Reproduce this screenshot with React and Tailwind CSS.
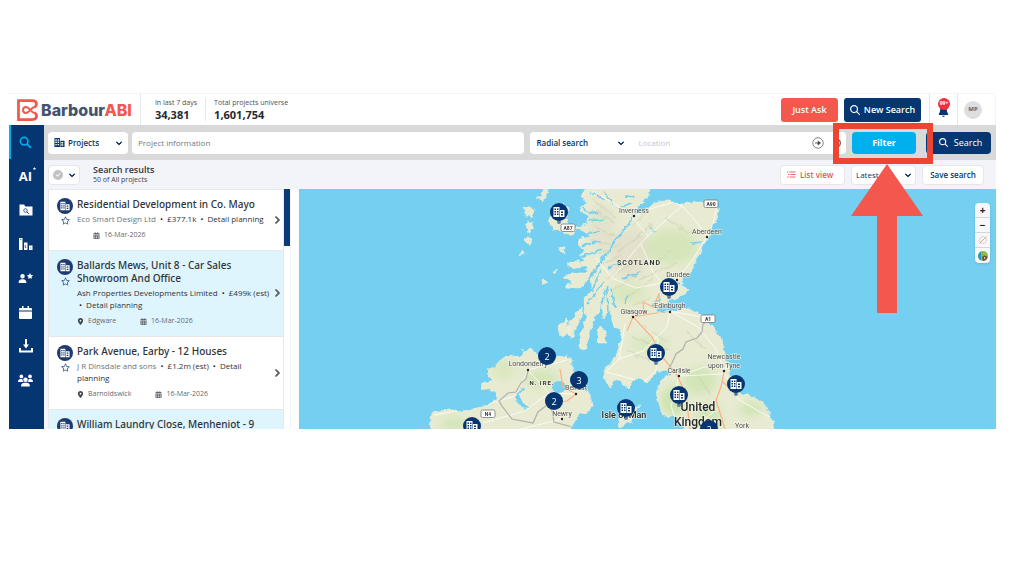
import clsx from 'clsx';
import {
  FaBell,
  FaCalendarDays,
  FaChevronDown,
  FaChevronRight,
  FaCircleCheck,
  FaLocationDot,
  FaMagnifyingGlass,
  FaRegStar,
  FaStar,
  FaUser,
  FaUsers
} from 'react-icons/fa6';

const MAP_W = 697;
const MAP_H = 240;

const projects = [
  {
    title: 'Residential Development in Co. Mayo',
    meta: [['Eco Smart Design Ltd', '£377.1k', 'Detail planning']],
    date: '16-Mar-2026'
  },
  {
    title: 'Ballards Mews, Unit 8 - Car Sales Showroom And Office',
    meta: [['Ash Properties Developments Limited', '£499k (est)'], ['', 'Detail planning']],
    place: 'Edgware',
    date: '16-Mar-2026',
    unread: true
  },
  {
    title: 'Park Avenue, Earby - 12 Houses',
    meta: [['J R Dinsdale and sons', '£1.2m (est)', 'Detail planning']],
    place: 'Barnoldswick',
    date: '16-Mar-2026'
  },
  {
    title: 'William Laundry Close, Menheniot - 9',
    unread: true
  }
];

// x / y on the 697 x 240 map canvas
const pins = [
  { x: 260, y: 23 },
  { x: 370, y: 98 },
  { x: 357, y: 164 },
  { x: 437, y: 195 },
  { x: 380, y: 206 },
  { x: 327, y: 219 },
  { x: 173, y: 237 },
  { x: 248, y: 167, count: 2 },
  { x: 280, y: 191, count: 3 },
  { x: 255, y: 212, count: 2 },
  { x: 410, y: 240, count: 2 }
];

const towns = [
  { name: 'Inverness', x: 335, y: 24, dot: [335, 27] },
  { name: 'Aberdeen', x: 408, y: 45, dot: [408, 48] },
  { name: 'Dundee', x: 379, y: 88, dot: [378, 91] },
  { name: 'Edinburgh', x: 371, y: 119, dot: [371, 123] },
  { name: 'Glasgow', x: 335, y: 125, dot: [334, 128] },
  { name: 'Carlisle', x: 380, y: 184, dot: [380, 187] },
  { name: 'Newcastle', x: 425, y: 170 },
  { name: 'upon Tyne', x: 425, y: 179, dot: [425, 182] },
  { name: 'Londonderry', x: 229, y: 177, dot: [229, 181] },
  { name: 'Belfast', x: 277, y: 201, dot: [277, 205] },
  { name: 'Newry', x: 263, y: 227, dot: [263, 230] },
  { name: 'York', x: 443, y: 239 }
];

const shields = [
  { name: 'A90', x: 412, y: 15 },
  { name: 'A87', x: 269, y: 39 },
  { name: 'A1', x: 409, y: 130 },
  { name: 'N4', x: 189, y: 225 }
];

const Chevron = ({ className }) => (
  <FaChevronDown size={6} stroke="currentColor" strokeWidth={80} className={className} />
);

const BuildingIcon = ({ className }) => (
  <svg viewBox="0 0 24 24" fill="currentColor" fillRule="evenodd" className={className}>
    <path d="M1 2h12v20H1zM3 5v3h3V5zM8 5v3h3V5zM3 10v3h3v-3zM8 10v3h3v-3zM3 15v3h3v-3zM8 15v3h3v-3z" />
    <path d="M14 8h9v14h-9zM16 11v3h4v-3zM16 16v3h4v-3z" />
  </svg>
);

const Logo = () => (
  <a href="#home" className="flex items-center gap-[3px] pr-2 pl-2">
    <svg viewBox="0 0 42 44" className="h-[22px] w-[21px]" fill="none" stroke="#f4574d">
      <path d="M35 17q4-3 4-7 0-7-9-7H3v38h27q9 0 9-7 0-4-4-7" strokeWidth="5.500" />
      <path d="M36 16c-7-1-11 12-18 12a6 6 0 1 1 0-12c7 0 11 13 18 12" strokeWidth="4" />
    </svg>
    <span className="font-[Inter,sans-serif] text-[16px] leading-5 font-extrabold text-[#44536e]">
      Barbour<span className="text-[#f4574d]">ABI</span>
    </span>
  </a>
);

const Header = () => (
  <header className="flex h-8 items-stretch rounded-tr border-t border-r border-gray-100 bg-white">
    <Logo />
    <dl className="my-0 flex items-center border-l border-gray-200 pl-3.5 text-[7px] text-[#4a4f57]">
      <div className="pr-2">
        <dt className="leading-[10px]">In last 7 days</dt>
        <dd className="text-[11px] leading-[13px] font-bold text-[#26292e]">34,381</dd>
      </div>
      <div className="border-l border-gray-200 pl-2">
        <dt className="leading-[10px]">Total projects universe</dt>
        <dd className="text-[11px] leading-[13px] font-bold text-[#26292e]">1,601,754</dd>
      </div>
    </dl>
    <div className="ml-auto flex items-center gap-1.5 pr-2">
      <button className="h-6 w-[57px] rounded-[3px] bg-[#f4574d] text-[9px] font-semibold text-white">Just Ask</button>
      <button className="flex h-6 w-[77px] items-center justify-center gap-1 rounded-[3px] bg-[#063672] text-[9px] font-semibold text-white">
        <FaMagnifyingGlass size={10} /> New Search
      </button>
    </div>
    <button aria-label="Notifications" className="relative flex w-7 items-center justify-center border-l border-gray-200">
      <FaBell size={11} className="mt-1 text-[#063672]" />
      <span className="absolute top-1 left-2 flex h-3 w-3 items-center justify-center rounded-full bg-[#f03040] text-[5px] font-bold text-white">
        99+
      </span>
    </button>
    <div className="flex items-center border-l border-gray-200 pr-[13px] pl-1.5">
      <button className="h-[18px] w-[18px] rounded-full bg-[#dedede] text-[6px] font-bold text-[#53657f]">MP</button>
    </div>
  </header>
);

const SearchIcon = () => (
  <svg viewBox="0 0 24 24" className="h-[13px] w-[13px]" fill="none" stroke="#00b0ee" strokeWidth="3">
    <circle cx="9.500" cy="9.500" r="7" />
    <path d="m14.500 14.500 7.500 7.500" strokeWidth="3.500" />
  </svg>
);

const ProjectFolderIcon = () => (
  <svg viewBox="0 0 28 24" className="h-3 w-3.5">
    <path d="M1 1h9l3 4h14v18H1z" fill="#fff" />
    <circle cx="13" cy="13" r="3.500" fill="none" stroke="#063672" strokeWidth="1.500" />
    <path d="m15.500 15.500 4 4" stroke="#063672" strokeWidth="2" />
  </svg>
);

const LeagueIcon = () => (
  <svg viewBox="0 0 28 24" className="h-3 w-3.5">
    <path d="M0 0h7v24H0zM10 9h7v15h-7zM20 15h7v9h-7z" fill="#fff" />
    <path d="M2.500 3h2M12.500 14v5h2M22.500 20h2" stroke="#063672" strokeWidth="1.500" fill="none" />
  </svg>
);

const DownloadIcon = () => (
  <svg viewBox="0 0 28 28" className="h-3.5 w-3.5" fill="none" stroke="#fff">
    <path d="M2 18v7h24v-7" strokeWidth="4" />
    <path d="M14 0v13" strokeWidth="4" />
    <path d="M8 11h12l-6 8z" fill="#fff" strokeWidth="0" />
  </svg>
);

const CalendarIcon = () => (
  <svg viewBox="0 0 26 26" className="h-[13px] w-[13px]" fill="#fff">
    <path d="M6 0h3v4h8V0h3v4h4q2 0 2 2v3H0V6q0-2 2-2h4zM0 12h26v12q0 2-2 2H2q-2 0-2-2z" />
    <path d="M0 9h26v3H0z" fill="#7f98b8" />
  </svg>
);

const Sidebar = () => {
  const items = [
    { label: 'Search', icon: <SearchIcon />, active: true },
    {
      label: 'AI',
      icon: (
        <span className="relative text-[13px] leading-4 font-bold">
          AI<FaStar size={3} className="absolute -top-px -right-1" />
        </span>
      )
    },
    { label: 'Saved projects', icon: <ProjectFolderIcon /> },
    { label: 'League tables', icon: <LeagueIcon /> },
    { label: 'Contacts', icon: <span className="flex items-start"><FaUser size={9} className="mt-px" /><FaStar size={6} /></span> },
    { label: 'Calendar', icon: <CalendarIcon /> },
    { label: 'Downloads', icon: <DownloadIcon /> },
    { label: 'Team', icon: <FaUsers size={15} /> }
  ];

  return (
    <nav className="w-[35px] shrink-0 bg-[#063672] text-white">
      {items.map((item) => (
        <a
          key={item.label}
          href="#nav"
          aria-label={item.label}
          className={clsx(
            'flex h-[34px] items-center justify-center border-l-2 pr-1',
            item.active ? 'border-[#00b0ee]' : 'border-transparent'
          )}
        >
          {item.icon}
        </a>
      ))}
    </nav>
  );
};

const Callout = () => (
  <>
    <div className="pointer-events-none absolute -top-[9px] -right-[17px] -bottom-[10px] -left-[19px] border-6 border-[#ee4432]" />
    <svg viewBox="0 0 72 149" className="pointer-events-none absolute top-8 -left-px h-[149px] w-[72px] max-w-none">
      <path d="M36 0 72 52H46v97H26V52H0z" fill="#f4574d" />
    </svg>
  </>
);

const SearchBar = () => (
  <form className="flex h-[35px] items-center bg-[#d9d9d9] pr-[5px] pl-1" onSubmit={(e) => e.preventDefault()}>
    <label className="relative flex h-[22px] w-20 items-center rounded-sm bg-white text-[#063672]">
      <BuildingIcon className="absolute left-1.5 h-[11px] w-[11px]" />
      <select aria-label="Record type" className="h-full w-full appearance-none pl-5 text-[8px] font-semibold">
        <option>Projects</option>
      </select>
      <Chevron className="absolute right-1.5" />
    </label>
    <input
      aria-label="Project information"
      placeholder="Project information"
      className="ml-1 h-[22px] min-w-0 flex-[381] rounded-sm bg-white px-1.5 text-[8px] placeholder:text-[#75787c]"
    />
    <div className="ml-1.5 flex h-[22px] min-w-0 flex-[316] items-center rounded-sm bg-white text-[#063672]">
      <label className="relative flex h-full w-[100px] items-center">
        <select aria-label="Location type" className="h-full w-full appearance-none pl-1.5 text-[8px] font-semibold">
          <option>Radial search</option>
        </select>
        <Chevron className="absolute right-1.5" />
      </label>
      <input aria-label="Location" placeholder="Location" className="h-full min-w-0 flex-1 px-2 text-[8px] placeholder:text-[#c4c6c9]" />
      <button type="button" aria-label="Use location" className="mr-2">
        <svg viewBox="0 0 24 24" className="h-3 w-3" fill="none" stroke="#5c5f63" strokeWidth="1.500">
          <circle cx="12" cy="12" r="10.500" />
          <path d="M6 12h10" strokeWidth="2" />
          <path d="m12 8 5 4-5 4z" fill="#333" />
        </svg>
      </button>
      <button type="button" aria-label="Pick on map" className="mr-1">
        <svg viewBox="0 0 24 24" className="h-2.5 w-2.5" fill="none" stroke="#5c5f63" strokeWidth="3">
          <circle cx="12" cy="12" r="8" />
        </svg>
      </button>
    </div>
    <div className="relative z-20 ml-1.5 flex">
      <button type="button" className="h-[22px] w-16 rounded-sm bg-[#00b0ee] text-[9px] font-bold text-white">Filter</button>
      <Callout />
    </div>
    <button className="ml-2.5 flex h-[22px] w-[65px] items-center justify-center gap-1.5 rounded-sm bg-[#063672] pl-1 text-[9px] text-white">
      <FaMagnifyingGlass size={9} /> Search
    </button>
  </form>
);

const ResultsBar = () => (
  <div className="flex h-[29px] items-center bg-[#f3f4f9] pr-3 pl-1 text-[8px] font-semibold text-[#063672]">
    <button aria-label="Select results" className="flex h-5 w-8 items-center justify-between rounded-sm border border-gray-200 bg-white px-1">
      <FaCircleCheck size={10} className="text-[#c3c3c3]" />
      <Chevron />
    </button>
    <div className="ml-[13px]">
      <h1 className="text-[9px] leading-[11px] font-semibold text-[#34373c]">Search results</h1>
      <p className="text-[7px] leading-[10px] font-normal text-[#3f4247]">50 of All projects</p>
    </div>
    <div className="ml-auto flex gap-1.5">
      <button className="flex h-5 w-[65px] items-center gap-1 rounded-sm border border-gray-200 bg-white pl-1.5 text-[#f05058]">
        <svg viewBox="0 0 18 14" className="h-[7px] w-[9px]" fill="none" stroke="currentColor" strokeWidth="1.800">
          <path d="M5 2h12M7 7h10M5 12h12M0 2h3M2 7h3M0 12h3" />
        </svg>
        List view
      </button>
      <label className="relative flex h-5 w-[65px] items-center rounded-sm border border-gray-200 bg-white">
        <select aria-label="Sort order" className="h-full w-full appearance-none pl-1 text-[8px] font-normal">
          <option>Latest</option>
        </select>
        <Chevron className="absolute right-1" />
      </label>
      <button className="h-5 w-[62px] rounded-sm border border-gray-200 bg-white">Save search</button>
    </div>
  </div>
);

const ProjectCard = ({ project }) => (
  <li
    className={clsx(
      'flex border-b border-gray-200 pt-2 pr-0.5 pb-[9px] pl-2 last:flex-1 last:border-b-0',
      project.unread ? 'bg-[#dff5fe]' : 'bg-white'
    )}
  >
    <div className="flex w-4 shrink-0 flex-col items-center gap-0.5">
      <span className="flex h-4 w-4 items-center justify-center rounded-full bg-[#1e3a72] text-white">
        <BuildingIcon className="h-2.5 w-2.5" />
      </span>
      {project.meta && (
        <button aria-label="Follow project">
          <FaRegStar size={9} className="text-[#3a5f94]" />
        </button>
      )}
    </div>
    <div className="min-w-0 flex-1 pl-1">
      <h2 className="font-['Noto_Sans',sans-serif] text-[10px] leading-[13px] font-medium text-[#2f3338]">{project.title}</h2>
      {project.meta && (
        <div className="mt-0.5 text-[8px] leading-3 text-[#2f3338]">
          {project.meta.map((line, row) => (
            <p key={row}>
              {line.map((part, i) => (
                <span key={i} className={clsx(i === 0 && !project.unread && 'text-[#71757b]', project.unread && 'font-medium')}>
                  {i > 0 && <span className="mx-0.5 text-[#222]"> • </span>}
                  {part}
                </span>
              ))}
            </p>
          ))}
        </div>
      )}
      {project.date && (
        <div className="mt-1 flex h-3 items-center text-[7px] text-[#666a70]">
          {project.place && (
            <span className="mr-6 flex items-center gap-1">
              <FaLocationDot size={7} className="text-[#44474c]" /> {project.place}
            </span>
          )}
          <span className={clsx('flex items-center gap-1', !project.place && 'ml-4')}>
            <FaCalendarDays size={7} /> {project.date}
          </span>
        </div>
      )}
    </div>
    {project.meta && (
      <FaChevronRight size={8} stroke="currentColor" strokeWidth={60} className="ml-px shrink-0 self-center text-[#55585d]" />
    )}
  </li>
);

const MapCanvas = () => (
  <svg
    viewBox={`0 0 ${MAP_W} ${MAP_H}`}
    preserveAspectRatio="xMidYMid slice"
    className="absolute inset-0 h-full w-full font-['Roboto']"
  >
    <defs>
      <filter id="coast" x="-5%" y="-5%" width="110%" height="110%">
        <feTurbulence type="fractalNoise" baseFrequency="0.15" numOctaves="3" seed="4" />
        <feDisplacementMap in="SourceGraphic" scale="6" xChannelSelector="R" yChannelSelector="G" />
      </filter>
      <filter id="soft" x="-20%" y="-20%" width="140%" height="140%">
        <feGaussianBlur stdDeviation="4" />
      </filter>
      <clipPath id="land">
        <path id="britain" d="M288-4 283 5 287 14 280 22 291 27 288 35 281 40 290 46 277 54 286 60 280 66 285 71 268 75 275 80 286 77 290 84 275 84 262 89 273 93 266 98 281 99 292 90 293 99 284 112 287 128 281 149 281 161 288 160 291 144 296 128 303 118 305 129 311 121 314 135 321 141 323 149 318 163 311 176 304 181 306 191 312 199 314 193 321 191 329 199 333 193 339 189 348 194 354 188 358 183 368 181 373 186 366 188 361 194 357 208 361 219 368 229 374 226 384 236 388 246H473L476 233 471 226 464 214 451 206 439 203 434 194 428 173 423 154 416 139 406 129 394 121 384 119 371 122 360 124 358 120 371 111 379 108 391 103 388 99 381 96 384 91 393 81 399 68 404 58 409 48 413 38 418 28 420 21 414 14 398 13 381 15 366 11 354 15 344 22 336 27 339 18 348 9 353-4Z" />
        <path id="ireland" d="M132 246 130 229 136 222 151 221 164 223 171 221 188 216 199 211 195 201 181 200 184 194 193 191 188 183 198 174 211 166 221 169 224 163 231 158 238 166 248 169 268 167 273 171 273 179 279 188 284 196 286 203 291 206 293 216 288 223 279 226 273 236 264 246Z" />
      </clipPath>
    </defs>
    <rect width={MAP_W} height={MAP_H} fill="#75cff0" />

    {/* Land and islands */}
    <g fill="#e8ebd2" stroke="#f5f5df" strokeWidth="0.500" filter="url(#coast)">
      <use href="#britain" />
      <use href="#ireland" />
      <path d="M264 14 270 19 268 31 277 38 286 34 274 46 261 43 249 35 251 27 259 28Z" />
      <path d="M238 10 247-2 251 3 243 12ZM225 18 236 20 233 29 224 25ZM229 32 234 34 232 45 228 43ZM229 47 233 50 230 56 226 52ZM225 61 226 65 221 67Z" />
      <path d="M261 57 266 58 265 65 260 62ZM254 82 259 80 256 86ZM243 91 249 92 244 97ZM280 51 286 53 282 57Z" />
      <path d="M259 138 268 130 271 145 261 147ZM270 134 283 119 284 124 273 149 269 147ZM300 138 306 142 307 154 299 154 298 143Z" />
      <path d="M320 230 331 220 340 216 333 232 321 239Z" />
    </g>

    {/* Terrain tints */}
    <g clipPath="url(#land)">
      <g filter="url(#soft)" fill="#c9e3ac">
        <ellipse cx="372" cy="58" rx="27" ry="18" opacity=".6" />
        <ellipse cx="329" cy="104" rx="18" ry="10" opacity=".5" />
        <ellipse cx="350" cy="155" rx="20" ry="7" opacity=".5" />
        <ellipse cx="401" cy="192" rx="17" ry="14" opacity=".7" />
        <ellipse cx="374" cy="212" rx="12" ry="15" opacity=".9" />
        <ellipse cx="409" cy="230" rx="13" ry="16" opacity=".7" />
        <ellipse cx="452" cy="220" rx="12" ry="7" opacity=".8" />
        <ellipse cx="242" cy="190" rx="17" ry="9" opacity=".7" />
        <ellipse cx="205" cy="180" rx="11" ry="10" opacity=".5" />
        <ellipse cx="155" cy="235" rx="13" ry="7" opacity=".7" />
        <ellipse cx="331" cy="65" rx="19" ry="25" fill="#ddd5c3" opacity=".5" />
        <ellipse cx="302" cy="38" rx="13" ry="25" fill="#ddd9c5" opacity=".5" />
      </g>
      {/* Ridges */}
      <g stroke="#cbd0b2" strokeWidth="1.500" fill="none" opacity=".5" filter="url(#coast)">
        <path d="M292 10l25 18M296 22l20 12M295 37l21 10M291 51l20 4M300 65l19-8M302 76l21-10M309 90l25-17M312 103l30-21M325 111l32-23M334 116l19-8M319 62l23-16M332 52l21-17M348 78l26-17M340 91l38-17M333 37l15-16M366 29l18 11M379 40l20 5M333 148l37 14M327 160l24 13M343 137l25 15M387 143l20 17M371 206l9 17M397 184l15 22M403 215l10 20" />
      </g>
      {/* Lochs */}
      <g stroke="#75cff0" strokeWidth="1.500" fill="none" filter="url(#coast)">
        <path d="M335 27 314 55 298 78 289 91" strokeWidth="1.800" />
        <path d="M283 19 299 26M281 33l25-3M282 45l19-2M282 57l19-5M280 68l23-7M301 81l-8 21M308 79l15-4M322 90l19-7M288 115l17-23M302 118l6-20M309 123l-1-22M316 119l-4-19M326 114l3-7M292 4l13 5M306 3l7 10M327 7l8 1M320 20l13-5M350 38l7 5M392 54l12-1" />
        <path d="M352 117l9-7M366 98l15-4M217 212l10 8M225 199l-8 6" />
      </g>
      <ellipse cx="260" cy="198" rx="7" ry="6" fill="#75cff0" />
      <path d="M219 204l5 10 7 5-8-1-7-10z" fill="#75cff0" />

      {/* Roads */}
      <g stroke="#fff" strokeWidth="0.900" fill="none" opacity=".85">
        <path d="M335 27l16-7 24-7 9 5 13 14 11 16 6-14 4-16M384 16 349 47l-7 7-28 34M349 47l-20-24-35-21M342 55l12 28 10 12M408 48l-13 21-17 22-41 8-24-10-16-20M371 122l28 16 18 22 8 21M371 122l-3 16-24 24-24 8M371 122l47 9M357 182l-12 11-38-10M380 187l25-9 23 1M334 130l25 20-2 32M380 187l-8 30 8 24M380 187l44-2M326 135l-6 35-12 12" />
        <path d="M229 181l21 23 27 1M229 181l-13 26-37 11-44 8M250 204l-24 18-42 12M263 230l-18-22M229 181l39-10M263 230l-49 12M425 183l14 27 31 18M419 219l-12 10-30 4" />
      </g>
      <g stroke="#fbb184" strokeWidth="1.200" fill="none">
        <path d="M334 128l19 20 8 17 17 21 9 20 4 34M334 128l17-3 20-3M334 128l-6 14M344 113l10 5 17 4M354 118l6-13 1 12M344 113l1 13" />
        <path d="M425 183l-3 15-5 13 9 29M437 205l-13-12M277 205l-9 7-13 1M277 205l-13-7-3-18" />
      </g>

      {/* Borders */}
      <path d="M409 132l-5 3-1 8-5 6-11 4-3 7-7 5-4 9-5 8M229 182l-2 8-5 4-5 9-8 1-9 8 3 5 3 4 7 9 21 4 5-11 9-7 5 5 2 12 22 6" fill="none" stroke="#aeb0ac" strokeWidth="1.200" />
    </g>

    {/* Labels */}
    <g textAnchor="middle" stroke="#f5f5e8" strokeWidth="1.500" paintOrder="stroke" strokeOpacity=".7">
      <g fontSize="7" fill="#4d5052">
        {towns.map((t) => (
          <text key={t.name} x={t.x} y={t.y}>{t.name}</text>
        ))}
      </g>
      <g fontSize="7" fontWeight="700" fill="#35383a">
        <text x="340" y="76" letterSpacing="1">SCOTLAND</text>
        <text x="243" y="196" fontSize="6" letterSpacing="1">N. IRE.</text>
      </g>
      <g fill="#24282a" fontWeight="500">
        <text x="325" y="229" fontSize="9">Isle of Man</text>
        <text x="399" y="222" fontSize="12">United</text>
        <text x="399" y="237" fontSize="12">Kingdom</text>
      </g>
    </g>
    {towns.filter((t) => t.dot).map((t) => (
      <circle key={t.name} cx={t.dot[0]} cy={t.dot[1]} r="1.200" fill="#222" />
    ))}
    {shields.map((s) => (
      <g key={s.name}>
        <rect x={s.x - 7} y={s.y - 4} width="14" height="7.500" rx="1.500" fill="#fff" stroke="#777" strokeWidth="0.800" />
        <text x={s.x} y={s.y + 2} fontSize="5" fontWeight="700" textAnchor="middle" fill="#333">{s.name}</text>
      </g>
    ))}
  </svg>
);

const MapPin = ({ pin }) => (
  <button
    aria-label={pin.count ? `${pin.count} projects` : 'Project'}
    className="absolute flex h-[18px] w-[18px] -translate-1/2 items-center justify-center rounded-full bg-[#063672] text-[9px] leading-none text-white"
    style={{ left: `${(pin.x / MAP_W) * 100}%`, top: `${(pin.y / MAP_H) * 100}%` }}
  >
    {pin.count || <BuildingIcon className="h-3 w-3" />}
    {!pin.count && <span className="absolute top-full -mt-px h-1 w-1 rounded-full bg-[#063672]/60" />}
  </button>
);

const ProjectMap = () => (
  <section aria-label="Map" className="relative ml-2 min-w-0 flex-1 overflow-hidden bg-[#75cff0]">
    <MapCanvas />
    {pins.map((pin) => (
      <MapPin key={`${pin.x}-${pin.y}`} pin={pin} />
    ))}
    <div className="absolute top-3.5 right-1.5 flex w-[15px] flex-col divide-y divide-gray-300 rounded-sm bg-[#f6f8f9] text-[10px] leading-none font-bold text-[#222] shadow">
      <button aria-label="Zoom in" className="h-[15px]">+</button>
      <button aria-label="Zoom out" className="h-[15px]">−</button>
      <button aria-label="Clear shape" className="flex h-[15px] items-center justify-center">
        <svg viewBox="0 0 16 16" className="h-2 w-2" fill="none">
          <circle cx="8" cy="8" r="7" stroke="#ccc" strokeWidth="1.500" />
          <path d="M1 15 15 1" stroke="#ff8f88" strokeWidth="2" />
        </svg>
      </button>
      <button aria-label="Map layers" className="flex h-[15px] items-center justify-center">
        <svg viewBox="0 0 20 20" className="h-2.5 w-2.5">
          <circle cx="10" cy="10" r="10" fill="#8dbb4e" />
          <path d="M6 1a10 10 0 0 0 0 18z" fill="#2695cf" />
          <path d="m8 12 4-3 7 2a10 10 0 0 1-9 9z" fill="#6c513f" />
          <path d="m12 12 3 1-2 4z" fill="#f3e9d2" />
        </svg>
      </button>
    </div>
  </section>
);

const App = () => (
  <div className="min-h-screen bg-white pt-[93px] pr-7 pl-[9px] font-['Open_Sans',sans-serif]">
    <Header />
    <div className="flex">
      <Sidebar />
      <main className="min-w-0 flex-1">
        <SearchBar />
        <ResultsBar />
        <div className="flex h-60">
          <div className="flex w-[247px] shrink-0 border-l-4 border-[#f3f4f9]">
            <ul className="flex min-w-0 flex-1 flex-col overflow-hidden border border-b-0 border-gray-200">
              {projects.map((project) => (
                <ProjectCard key={project.title} project={project} />
              ))}
            </ul>
            <div className="w-[7px] border-r border-gray-100 bg-white">
              <div className="h-[57px] bg-[#0b3a78]" />
            </div>
          </div>
          <ProjectMap />
        </div>
      </main>
    </div>
  </div>
);

export default App;
